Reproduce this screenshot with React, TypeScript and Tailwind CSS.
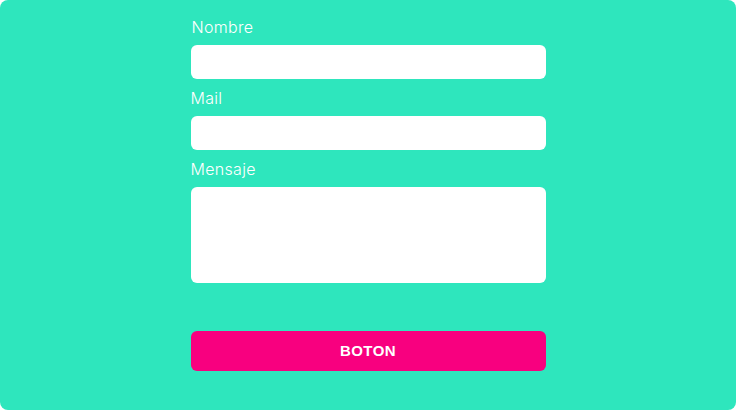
export default function App() {
  return (
    <div className="w-[736px] h-[410px] bg-white">
      <div className="w-full h-full rounded-lg bg-[#2ee6bd] flex justify-center pt-[17px]">
        <form className="w-[355px] flex flex-col" style={{ fontFamily: "Inter, 'Open Sans', sans-serif" }}>
          <label className="text-[16px] leading-5 font-light tracking-[0.3px] text-white pl-[1px]">Nombre</label>
          <input className="mt-2 h-[34px] rounded-md bg-white outline-none" />
          <label className="mt-[9px] text-[16px] leading-5 font-light tracking-[0.3px] text-white">Mail</label>
          <input className="mt-2 h-[34px] rounded-md bg-white outline-none" />
          <label className="mt-[9px] text-[16px] leading-5 font-light tracking-[0.3px] text-white">Mensaje</label>
          <textarea className="mt-2 h-[96px] rounded-md bg-white outline-none resize-none" />
          <button type="button" className="mt-12 h-10 rounded-md bg-[#f8007f] text-white text-[15px] font-bold tracking-wide" style={{ fontFamily: "'Liberation Sans', Arial, sans-serif" }}>
            BOTON
          </button>
        </form>
      </div>
    </div>
  );
}
